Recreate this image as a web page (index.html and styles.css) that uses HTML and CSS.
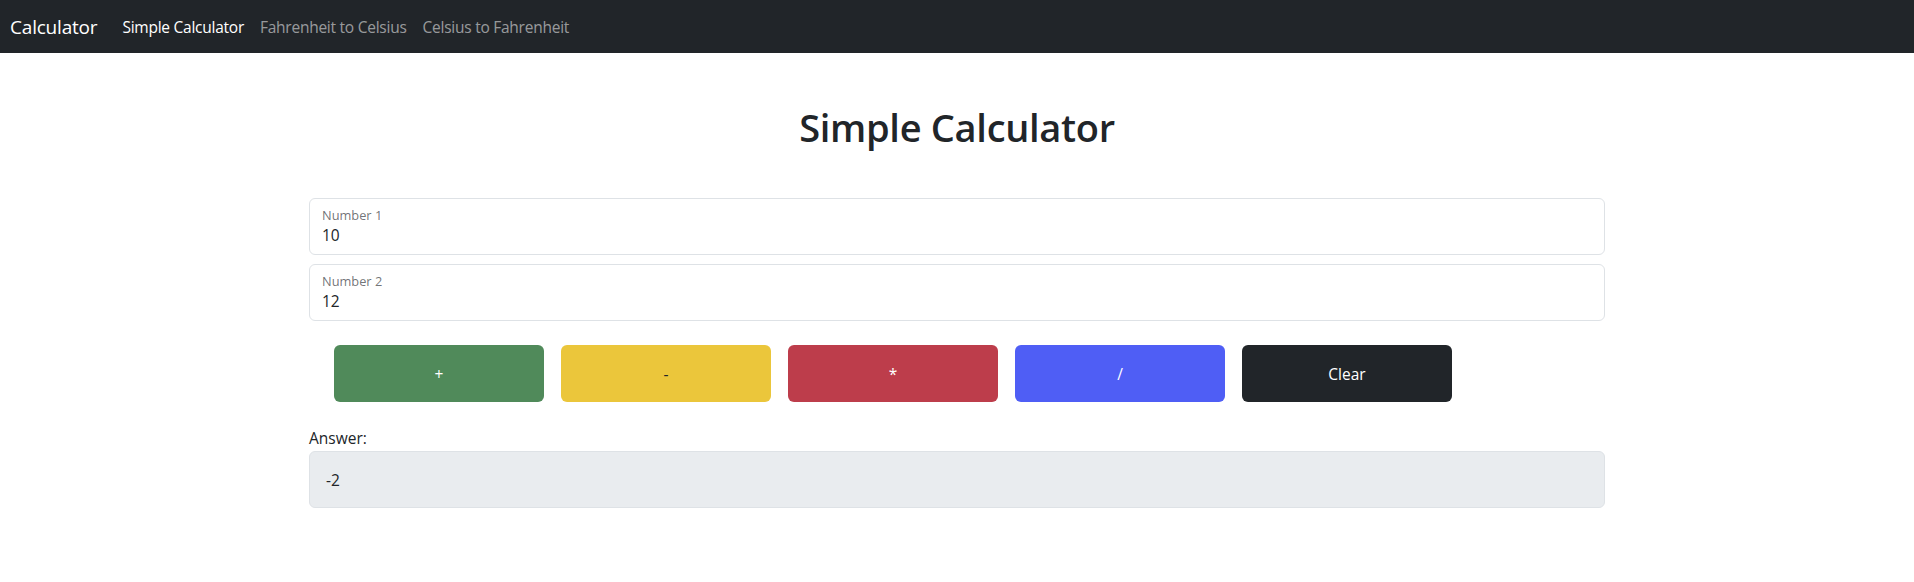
FILE: index.html
```html
<!DOCTYPE html>
<html lang="en">
<head>
<meta charset="utf-8">
<title>Simple Calculator</title>
<link rel="stylesheet" href="styles.css">
</head>
<body>
<nav class="navbar">
  <span class="brand">Calculator</span>
  <ul class="nav">
    <li><a class="nav-link active" href="#">Simple Calculator</a></li>
    <li><a class="nav-link" href="#">Fahrenheit to Celsius</a></li>
    <li><a class="nav-link" href="#">Celsius to Fahrenheit</a></li>
  </ul>
</nav>
<main class="container">
  <h1 class="title">Simple Calculator</h1>
  <div class="fields">
    <div class="field">
      <label class="field-label">Number 1</label>
      <div class="field-value">10</div>
    </div>
    <div class="field">
      <label class="field-label">Number 2</label>
      <div class="field-value">12</div>
    </div>
  </div>
  <div class="buttons">
    <button class="btn btn-green">+</button>
    <button class="btn btn-yellow">-</button>
    <button class="btn btn-red">*</button>
    <button class="btn btn-blue">/</button>
    <button class="btn btn-dark">Clear</button>
  </div>
  <div class="answer-label">Answer:</div>
  <div class="answer">-2</div>
</main>
</body>
</html>
```
FILE: styles.css
```css
* { box-sizing: border-box; }
body {
  margin: 0;
  font-family: "Open Sans", "Noto Sans", sans-serif;
  color: #212529;
  background: #fff;
}
.navbar {
  height: 53px;
  background: #212529;
  display: flex;
  align-items: center;
  padding-left: 10px;
}
.brand {
  color: #fff;
  font-size: 19px;
  margin-right: 25px;
  letter-spacing: -0.2px;
}
.nav {
  list-style: none;
  margin: 0;
  padding: 0;
  display: flex;
  gap: 16px;
}
.nav-link {
  color: rgba(255, 255, 255, 0.55);
  text-decoration: none;
  font-size: 15.5px;
  letter-spacing: -0.25px;
}
.nav-link.active { color: #fff; }
.container {
  width: 1296px;
  margin: 0 auto;
}
.title {
  margin: 50px 0 0;
  text-align: center;
  font-size: 38px;
  font-weight: 600;
  line-height: 48px;
  letter-spacing: -0.3px;
}
.fields {
  margin-top: 47px;
  display: flex;
  flex-direction: column;
  gap: 9px;
}
.field {
  height: 57px;
  border: 1px solid #dee2e6;
  border-radius: 6px;
  padding: 8px 12px 0;
}
.field-label {
  display: block;
  font-size: 12.8px;
  line-height: 16px;
  color: rgba(33, 37, 41, 0.65);
}
.field-value {
  margin-top: 2px;
  font-size: 15.5px;
  line-height: 20px;
}
.buttons {
  margin-top: 24px;
  padding-left: 25px;
  display: flex;
  gap: 17px;
}
.btn {
  width: 210px;
  height: 57px;
  border: none;
  border-radius: 6px;
  font-family: inherit;
  font-size: 15.5px;
  color: #fff;
}
.btn-green { background: #508a5a; }
.btn-yellow { background: #ebc63b; color: #212529; }
.btn-red { background: #bd3d4b; }
.btn-blue { background: #4f5ef5; }
.btn-dark { background: #212529; }
.answer-label {
  margin-top: 24px;
  font-size: 15.5px;
  line-height: 24px;
}
.answer {
  margin-top: 1px;
  height: 57px;
  background: #e9ecef;
  border: 1px solid #dee2e6;
  border-radius: 6px;
  padding-left: 16px;
  display: flex;
  align-items: center;
  font-size: 15.5px;
}
```
